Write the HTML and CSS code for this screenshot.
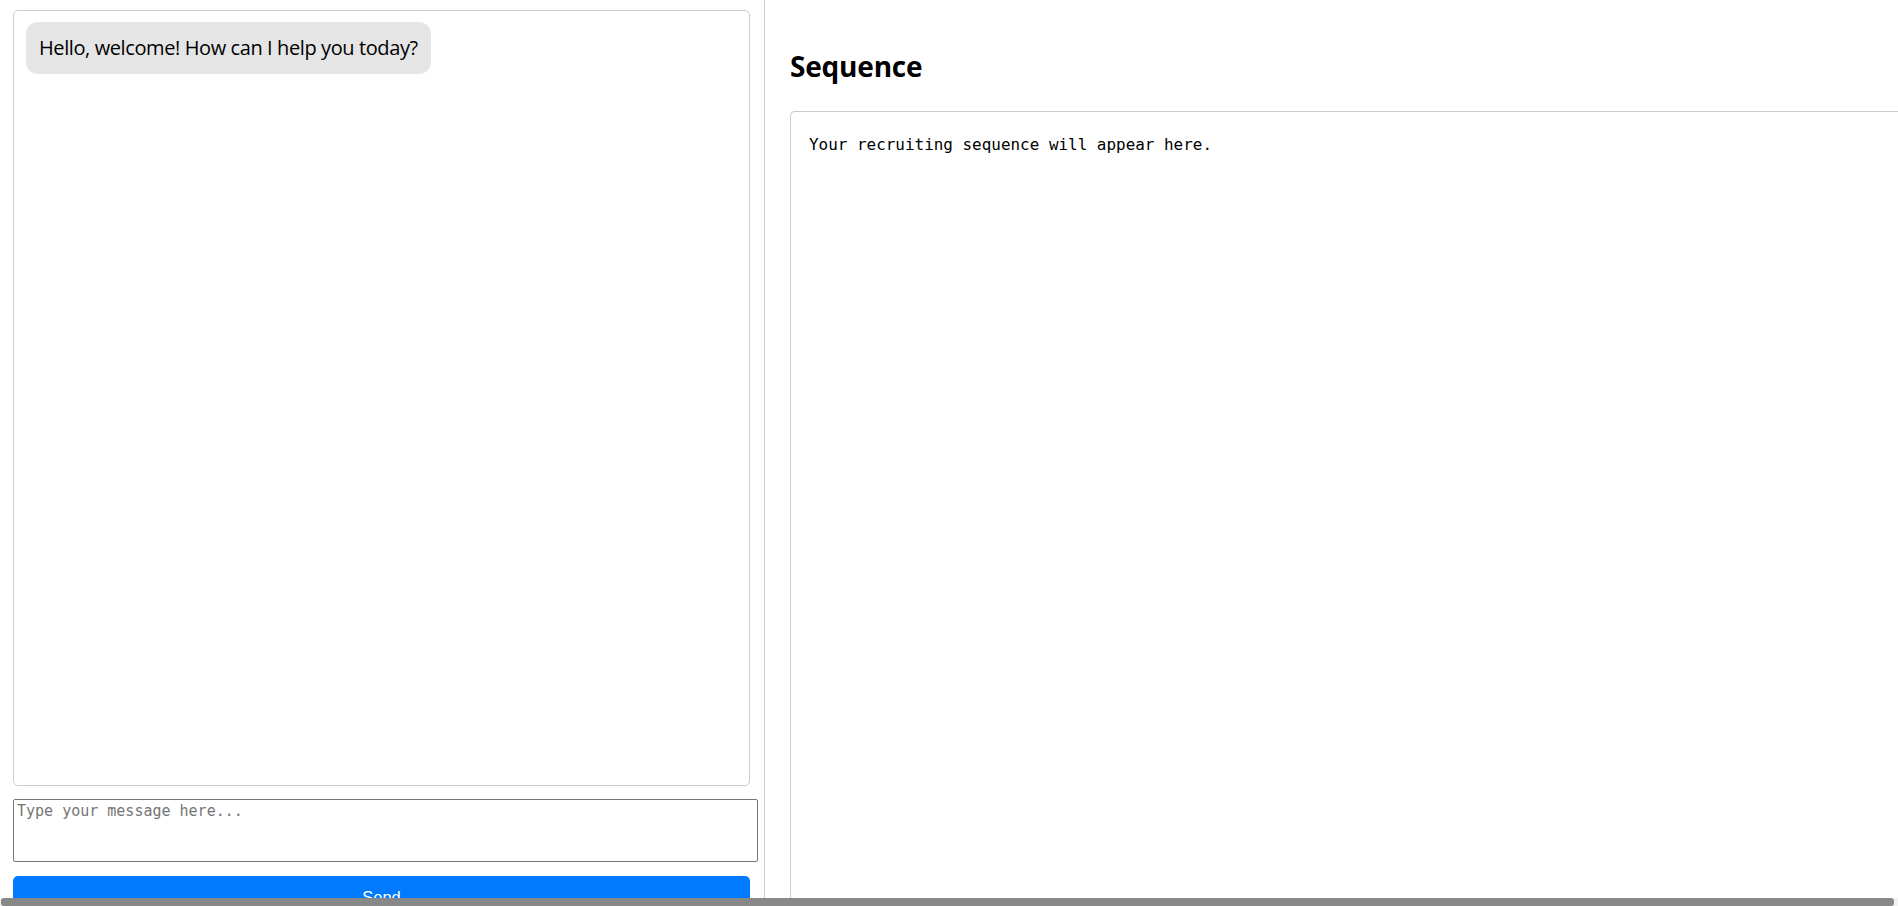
FILE: index.html
```html
<!DOCTYPE html>
<html lang="en">
<head>
<meta charset="utf-8">
<title>Recruiting Sequence</title>
<link rel="stylesheet" href="styles.css">
</head>
<body>
<div class="app">
  <section class="chat-panel">
    <div class="chat-box">
      <div class="bubble">Hello, welcome! How can I help you today?</div>
    </div>
    <textarea class="chat-input" placeholder="Type your message here..."></textarea>
    <button class="send-btn" type="button">Send</button>
  </section>
  <section class="seq-panel">
    <h2 class="seq-title">Sequence</h2>
    <div class="seq-box">Your recruiting sequence will appear here.</div>
  </section>
</div>
<div class="hscroll"><div class="hscroll-thumb"></div></div>
</body>
</html>
```

FILE: styles.css
```css
html, body {
  margin: 0;
  padding: 0;
  background: #fff;
}
body {
  font-family: "Open Sans", "Noto Sans", sans-serif;
  color: #000;
  overflow: hidden;
}
.app {
  display: flex;
  height: 100vh;
  overflow: hidden;
}
.chat-panel {
  flex: none;
  width: 765px;
  box-sizing: border-box;
  padding: 10px 14px 0 13px;
  border-right: 1px solid #cccccc;
  display: flex;
  flex-direction: column;
}
.chat-panel > * {
  flex: none;
}
.chat-box {
  height: 776px;
  box-sizing: border-box;
  border: 1px solid #cccccc;
  border-radius: 5px;
  padding: 11px 12px;
}
.bubble {
  display: inline-block;
  background: #e5e5e5;
  border-radius: 12px;
  padding: 12px 13px 13px;
  font-size: 20px;
  letter-spacing: -0.4px;
  line-height: 27px;
  color: #000;
}
.chat-input {
  display: block;
  margin-top: 13px;
  width: 745px;
  height: 63px;
  box-sizing: border-box;
  border: 1px solid #767676;
  border-radius: 2px;
  padding: 2px 3px;
  resize: none;
  font-family: "DejaVu Sans Mono", "Liberation Mono", monospace;
  font-size: 15px;
  line-height: 18px;
}
.chat-input::placeholder {
  color: #757575;
}
.send-btn {
  display: block;
  margin-top: 14px;
  width: 737px;
  height: 43px;
  border: none;
  border-radius: 5px;
  background: #007bff;
  color: #fff;
  font-family: "Liberation Sans", Arial, sans-serif;
  font-size: 16.5px;
  padding: 0;
}
.seq-panel {
  flex: none;
  width: 1138px;
  box-sizing: border-box;
  padding: 21px 0 0 25px;
  display: flex;
  flex-direction: column;
}
.seq-title {
  margin: 25px 0 25px;
  font-size: 28px;
  letter-spacing: -0.2px;
  font-weight: 700;
  line-height: 40px;
}
.seq-box {
  flex: 1;
  border: 1px solid #cccccc;
  border-right: none;
  border-bottom: none;
  border-radius: 5px 0 0 0;
  padding: 24px 18px;
  font-family: "DejaVu Sans Mono", "Liberation Mono", monospace;
  font-size: 15.95px;
  line-height: 18px;
  white-space: pre-wrap;
}
.hscroll {
  position: fixed;
  left: 0;
  right: 0;
  bottom: 0;
  height: 8px;
  background: #f1f1f1;
}
.hscroll-thumb {
  margin-left: 1px;
  width: calc(100% - 5px);
  height: 100%;
  background: #888888;
  border-radius: 3px;
}
```
